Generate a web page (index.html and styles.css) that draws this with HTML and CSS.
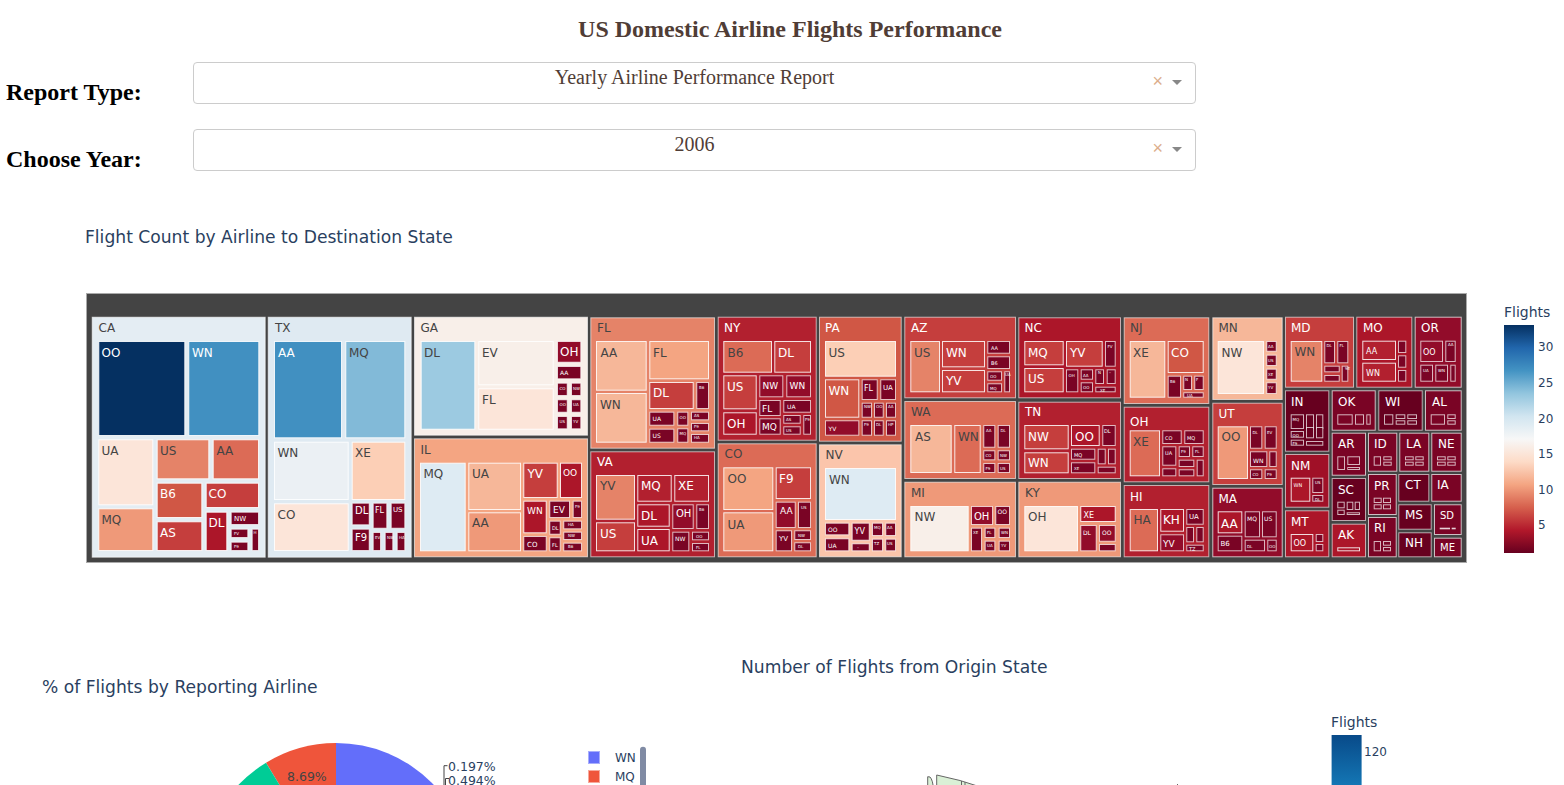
FILE: index.html
```
<!DOCTYPE html>
<html lang="en">
<head>
<meta charset="utf-8">
<title>US Domestic Airline Flights Performance</title>
<link rel="stylesheet" href="styles.css">
</head>
<body>
<h1 class="page-title">US Domestic Airline Flights Performance</h1>
<div class="row">
  <div class="row-label">Report Type:</div>
  <div class="dropdown"><span class="dd-value">Yearly Airline Performance Report</span><span class="dd-clear">×</span><span class="dd-arrow"></span></div>
</div>
<div class="row">
  <div class="row-label">Choose Year:</div>
  <div class="dropdown"><span class="dd-value">2006</span><span class="dd-clear">×</span><span class="dd-arrow"></span></div>
</div>
<h2 class="chart-title tree-title">Flight Count by Airline to Destination State</h2>
<svg class="tm" width="1564" height="340" viewBox="0 247 1564 340" role="img">
<defs>
<linearGradient id="rdbu" x1="0" y1="0" x2="0" y2="1"><stop offset="0" stop-color="#053061"/><stop offset=".1" stop-color="#2166ac"/><stop offset=".2" stop-color="#4393c3"/><stop offset=".3" stop-color="#92c5de"/><stop offset=".4" stop-color="#d1e5f0"/><stop offset=".5" stop-color="#f7f7f7"/><stop offset=".6" stop-color="#fddbc7"/><stop offset=".7" stop-color="#f4a582"/><stop offset=".8" stop-color="#d6604d"/><stop offset=".9" stop-color="#b2182b"/><stop offset="1" stop-color="#67001f"/></linearGradient>
</defs>
<rect class="plate" x="86.5" y="293.5" width="1380" height="269"/>

<!-- CA -->
<rect class="st k7b" x="92.2" y="317.2" width="173" height="240"/>
<rect class="k1" x="98.8" y="341.5" width="86" height="94"/><rect class="k2" x="188.8" y="341.5" width="70" height="94"/>
<rect class="k8" x="98.8" y="439.8" width="54" height="65"/><rect class="k13" x="157.2" y="439.8" width="51.6" height="39"/><rect class="k14" x="213.2" y="439.8" width="45.3" height="39"/>
<rect class="k12" x="98.8" y="508.8" width="54" height="41.7"/><rect class="k15" x="157.2" y="483.2" width="44.6" height="34.3"/><rect class="k16" x="206.2" y="483.2" width="52.3" height="24.3"/>
<rect class="k16" x="157.2" y="521.8" width="44.6" height="28.7"/><rect class="k18" x="206.2" y="512.2" width="20.6" height="38.3"/>
<g class="k21"><rect x="231.2" y="512.2" width="27.3" height="12.3"/><rect x="231.2" y="529.2" width="16.6" height="8.3"/><rect x="231.2" y="542.2" width="16.6" height="8.3"/><rect x="252.2" y="529.2" width="6.3" height="21.3"/></g>
<text class="d" x="98.5" y="331.7">CA</text><text x="101.5" y="356.7">OO</text><text x="192" y="356.7">WN</text><text class="d" x="101.5" y="454.5">UA</text><text class="d" x="160" y="454.5">US</text><text class="d" x="216.5" y="454.5">AA</text><text class="d" x="101.5" y="523.5">MQ</text><text x="160" y="498">B6</text><text x="208.5" y="498">CO</text><text x="160" y="536.5">AS</text><text x="208.5" y="527">DL</text>
<g class="s7"><text x="234" y="521">NW</text></g><g class="s4"><text x="234" y="535">FV</text><text x="234" y="548">F9</text><text x="253.5" y="534">H</text></g>

<!-- TX -->
<rect class="st k5b" x="268.2" y="317.2" width="143" height="240"/>
<rect class="k2" x="274.5" y="341.5" width="67" height="96.3"/><rect class="k3" x="345.8" y="341.5" width="59" height="96.3"/>
<rect class="k6" x="274.5" y="442.2" width="73.7" height="57.3"/><rect class="k9" x="352.2" y="442.2" width="52.6" height="57.3"/><rect class="k8" x="274.5" y="503.8" width="73.7" height="46.7"/>
<g class="k21"><rect x="352.2" y="503.2" width="17" height="21.6"/><rect x="373.2" y="503.2" width="13.6" height="25"/><rect x="391.2" y="503.2" width="13.6" height="25"/><rect x="352.2" y="529.2" width="17" height="21.3"/><rect x="373.2" y="532.5" width="7.3" height="18"/><rect x="385.2" y="532.5" width="7.6" height="18"/><rect x="397.2" y="532.5" width="7.6" height="18"/></g>
<text class="d" x="275" y="331.7">TX</text><text x="278" y="356.7">AA</text><text class="d" x="349" y="356.7">MQ</text><text class="d" x="277.5" y="457">WN</text><text class="d" x="355" y="457">XE</text><text class="d" x="277.5" y="518.5">CO</text>
<g class="s10"><text x="355" y="514">DL</text><text x="355" y="541">F9</text></g><g class="s8"><text x="375" y="513">FL</text></g><g class="s7"><text x="393" y="512">US</text></g><g class="s4"><text x="375" y="539">EV</text><text x="387" y="539">NW</text><text x="399" y="539">HA</text></g>

<!-- GA -->
<rect class="st k7" x="414.5" y="317.2" width="173" height="118"/>
<rect class="k4" x="421.2" y="341.5" width="53.6" height="87.7"/><rect class="k7" x="478.8" y="341.5" width="74.4" height="43.3"/><rect class="k8" x="478.8" y="388.8" width="74.4" height="40.4"/><rect class="k20" x="557.5" y="341.5" width="23.3" height="20.7"/>
<g class="k21"><rect x="557.5" y="366.5" width="23.3" height="12.3"/><rect x="557.5" y="383.2" width="9.7" height="12.3"/><rect x="571.5" y="383.2" width="9.3" height="12.3"/><rect x="557.5" y="399.8" width="9.7" height="12.4"/><rect x="571.5" y="399.8" width="9.3" height="12.4"/><rect x="557.5" y="416.5" width="9.7" height="12.3"/><rect x="571.5" y="416.5" width="9.3" height="12.3"/></g>
<text class="d" x="420.5" y="331.7">GA</text><text class="d" x="424" y="356.7">DL</text><text class="d" x="482" y="356.7">EV</text><text class="d" x="482" y="403.5">FL</text><text x="560" y="356">OH</text>
<g class="s6"><text x="560" y="375">AA</text></g><g class="s4"><text x="559.5" y="389.5">CO</text><text x="573" y="389.5">NW</text><text x="559.5" y="406">OO</text><text x="573" y="406">UA</text><text x="559.5" y="422.5">US</text><text x="573" y="422.5">YV</text></g>

<!-- IL -->
<rect class="st k11" x="414.5" y="438.8" width="173" height="118"/>
<rect class="k5" x="420.5" y="463.2" width="44.7" height="87.6"/><rect class="k10" x="468.8" y="463.2" width="51.7" height="46.3"/><rect class="k12" x="468.8" y="512.8" width="51.7" height="38"/><rect class="k16" x="523.8" y="463.2" width="33.4" height="34.3"/><rect class="k18" x="560.5" y="463.2" width="21" height="34.3"/><rect class="k18" x="523.8" y="501.2" width="22.4" height="31.6"/>
<g class="k21"><rect x="549.8" y="501.2" width="19.7" height="16.3"/><rect x="573.2" y="501.2" width="8.3" height="16.3"/><rect x="523.8" y="536.5" width="22.4" height="14.3"/><rect x="549.8" y="521.2" width="10.4" height="13"/><rect x="563.8" y="521.2" width="17.7" height="7.6"/><rect x="563.8" y="532.2" width="17.7" height="7.3"/><rect x="563.8" y="543.2" width="17.7" height="7.6"/><rect x="549.8" y="537.8" width="10.4" height="13"/></g>
<text class="d" x="420.5" y="454">IL</text><text class="d" x="423.5" y="478">MQ</text><text class="d" x="472" y="478">UA</text><text class="d" x="472" y="527">AA</text><text x="527.5" y="478">YV</text><g class="s9"><text x="563" y="475.5">OO</text><text x="527" y="513.5">WN</text><text x="553" y="513">EV</text></g>
<g class="s7"><text x="527" y="547">CO</text></g><g class="s5"><text x="552" y="529.5">DL</text><text x="552" y="546.5">FL</text></g><g class="s4"><text x="575" y="508">F9</text><text x="568" y="526">HA</text><text x="568" y="537">NW</text><text x="568" y="548">B6</text></g>

<!-- FL -->
<rect class="st k13" x="590.8" y="317.8" width="123.7" height="130.4"/>
<rect class="k10" x="596.5" y="341.5" width="49.7" height="48.7"/><rect class="k10" x="596.5" y="393.5" width="49.7" height="48.7"/><rect class="k11" x="649.8" y="341.5" width="58.7" height="37.3"/><rect class="k16" x="649.8" y="382.5" width="43.4" height="26"/>
<g class="k21"><rect x="696.8" y="382.5" width="11.7" height="26"/><rect x="649.8" y="412.2" width="24" height="13"/><rect x="649.8" y="429.2" width="24" height="13"/><rect x="677.8" y="412.2" width="10" height="13"/><rect x="677.8" y="428.8" width="10" height="13.4"/><rect x="691.5" y="412.2" width="17" height="7.6"/><rect x="691.5" y="423.5" width="17" height="7.3"/><rect x="691.5" y="434.5" width="17" height="7.7"/></g>
<text class="d" x="597" y="331.7">FL</text><text class="d" x="600.5" y="356.5">AA</text><text class="d" x="653" y="356.5">FL</text><text class="d" x="600" y="408.5">WN</text><text x="653" y="397">DL</text>
<g class="s6"><text x="652.5" y="421">UA</text><text x="652.5" y="438">US</text></g><g class="s4"><text x="699" y="389">B6</text><text x="679.5" y="419">OO</text><text x="679.5" y="435">MQ</text><text x="694" y="417">AS</text><text x="694" y="428">F9</text><text x="694" y="439">HA</text></g>

<!-- VA -->
<rect class="st k17" x="590.8" y="451.8" width="123.7" height="105"/>
<rect class="k13" x="596.5" y="475.5" width="38" height="43.7"/><rect class="k16" x="596.5" y="522.8" width="38" height="28"/><rect class="k17" x="637.8" y="475.5" width="33.4" height="25.7"/><rect class="k17" x="674.8" y="475.5" width="33.7" height="25.7"/><rect class="k18" x="637.8" y="504.8" width="31.4" height="21.4"/><rect class="k18" x="637.8" y="529.5" width="31.4" height="21.3"/><rect class="k20" x="672.8" y="504.8" width="20.4" height="23.7"/>
<g class="k21"><rect x="696.8" y="504.8" width="11.7" height="23.7"/><rect x="672.8" y="532.2" width="16" height="18.6"/><rect x="692.5" y="532.2" width="16" height="7.6"/><rect x="692.5" y="543.5" width="16" height="7.3"/></g>
<text x="597" y="466">VA</text><text class="d" x="600" y="490">YV</text><text x="600" y="537.5">US</text><text x="641" y="490">MQ</text><text x="678" y="490">XE</text><text x="641" y="520">DL</text><text x="641" y="544.5">UA</text><g class="s10"><text x="676" y="517">OH</text></g><g class="s6"><text x="675" y="541">NW</text></g><g class="s4"><text x="699" y="511">B6</text><text x="696" y="538">OO</text><text x="696" y="549">FL</text></g>

<!-- NY -->
<rect class="st k17" x="718.2" y="317.2" width="98" height="123"/>
<rect class="k14" x="723.8" y="341.5" width="47.7" height="30.7"/><rect class="k16" x="774.8" y="341.5" width="35.7" height="30.7"/><rect class="k16" x="723.8" y="375.8" width="32.4" height="33"/><rect class="k18" x="723.8" y="412.8" width="32.4" height="21.4"/><rect class="k20" x="759.8" y="375.8" width="23" height="21"/><rect class="k20" x="786.8" y="375.8" width="23.7" height="21"/>
<g class="k21"><rect x="759.8" y="400.5" width="20.4" height="15"/><rect x="783.8" y="400.5" width="26.7" height="11.7"/><rect x="759.8" y="418.8" width="20.4" height="15.4"/><rect x="783.8" y="415.5" width="16.4" height="7.7"/><rect x="783.8" y="426.8" width="16.4" height="7.4"/><rect x="803.8" y="415.5" width="6.7" height="18.7"/></g>
<text x="724" y="331.7">NY</text><text class="d" x="727.5" y="356.5">B6</text><text x="778" y="356.5">DL</text><text x="727" y="391">US</text><text x="727" y="428">OH</text><g class="s9"><text x="762.5" y="389">NW</text><text x="789.5" y="389">WN</text><text x="762" y="411.5">FL</text><text x="762" y="429.5">MQ</text></g><g class="s6"><text x="787" y="409">UA</text></g><g class="s4"><text x="786" y="421">AS</text><text x="786" y="432">US</text><text x="805" y="421">F9</text></g>

<!-- PA -->
<rect class="st k15" x="819.5" y="317.2" width="81.7" height="124"/>
<rect class="k9" x="825.5" y="341.5" width="70" height="34.7"/><rect class="k15" x="825.5" y="379.8" width="33.3" height="37.4"/><rect class="k20" x="825.5" y="420.8" width="33.3" height="14.4"/>
<g class="k21"><rect x="862.2" y="379.8" width="15" height="19.7"/><rect x="880.8" y="379.8" width="14.7" height="19.7"/><rect x="862.2" y="403.2" width="9.3" height="14"/><rect x="874.5" y="403.2" width="8.7" height="14"/><rect x="886.5" y="403.2" width="9" height="14"/><rect x="862.2" y="420.8" width="9.3" height="14.4"/><rect x="874.5" y="420.8" width="8.7" height="14.4"/><rect x="886.5" y="420.8" width="9" height="14.4"/></g>
<text x="825" y="331.7">PA</text><text class="d" x="828.5" y="356.5">US</text><text x="828.5" y="394.5">WN</text><g class="s8"><text x="864" y="391">FL</text></g><g class="s7"><text x="883" y="390">UA</text></g><g class="s6"><text x="828.5" y="431">YV</text></g><g class="s4"><text x="864" y="408">NW</text><text x="876" y="408">OO</text><text x="888" y="408">AA</text><text x="864" y="426">F9</text><text x="876" y="426">DL</text><text x="888" y="426">HP</text></g>

<!-- CO -->
<rect class="st k14" x="718.2" y="443.8" width="98" height="113"/>
<rect class="k11" x="723.8" y="467.8" width="49" height="41.7"/><rect class="k12" x="723.8" y="512.8" width="49" height="38"/><rect class="k16" x="776.2" y="467.8" width="34.3" height="30.7"/><rect class="k20" x="776.2" y="502.2" width="19" height="25.3"/>
<g class="k21"><rect x="798.5" y="502.2" width="12" height="25.3"/><rect x="776.2" y="530.8" width="15.3" height="20"/><rect x="794.8" y="530.8" width="15.7" height="8.7"/><rect x="794.8" y="542.8" width="15.7" height="8"/></g>
<text class="d" x="724.5" y="458">CO</text><text class="d" x="727.5" y="482.5">OO</text><text class="d" x="727.5" y="529">UA</text><text x="779" y="482.5">F9</text><g class="s9"><text x="780" y="514">AA</text></g><g class="s7"><text x="779" y="541">YV</text></g><g class="s4"><text x="801" y="509">US</text><text x="798" y="537">NW</text><text x="798" y="548">DL</text></g>

<!-- NV -->
<rect class="st k9b" x="819.5" y="444.8" width="81.7" height="112"/>
<rect class="k5" x="825.5" y="468.5" width="70" height="51"/>
<g class="k21"><rect x="825.5" y="523.2" width="23.3" height="11.6"/><rect x="825.5" y="538.8" width="23.3" height="12"/><rect x="852.2" y="523.2" width="17" height="17"/><rect x="852.2" y="543.8" width="17" height="7"/><rect x="872.5" y="523.2" width="10" height="12.3"/><rect x="885.8" y="523.2" width="9.7" height="12.3"/><rect x="872.5" y="539.2" width="10" height="11.6"/><rect x="885.8" y="539.2" width="9.7" height="11.6"/></g>
<text class="d" x="825.5" y="458.5">NV</text><text class="d" x="829" y="483.5">WN</text><g class="s8"><text x="854.5" y="534">YV</text></g><g class="s6"><text x="828" y="532">OO</text><text x="828" y="548">UA</text></g><g class="s4"><text x="874" y="529">MQ</text><text x="887" y="529">AA</text><text x="874" y="545">TZ</text><text x="887" y="545">US</text><text x="857" y="549">–</text></g>

<!-- AZ -->
<rect class="st k16" x="904.8" y="317.2" width="110.7" height="80.6"/>
<rect class="k13" x="910.8" y="341.5" width="28.7" height="50.3"/><rect class="k16" x="942.5" y="341.5" width="42" height="25.3"/><rect class="k16" x="942.5" y="370.5" width="42" height="21.3"/>
<g class="k21"><rect x="987.8" y="341.5" width="21.7" height="11.7"/><rect x="987.8" y="356.8" width="21.7" height="11.7"/><rect x="987.8" y="371.8" width="13.7" height="8.4"/><rect x="987.8" y="383.8" width="13.7" height="8"/><rect x="1004.8" y="371.8" width="4.7" height="20"/></g>
<text x="911" y="331.7">AZ</text><text class="d" x="914" y="356.5">US</text><text x="946" y="356.5">WN</text><text x="946" y="385">YV</text><g class="s5"><text x="991" y="350">AA</text><text x="991" y="365">B6</text></g><g class="s4"><text x="990" y="378">OO</text><text x="990" y="390">MQ</text><text x="1005" y="376">UA</text></g>

<!-- WA -->
<rect class="st k14" x="904.8" y="401.5" width="110.7" height="77"/>
<rect class="k10" x="910.8" y="425.5" width="40.4" height="47"/><rect class="k14" x="954.8" y="425.5" width="25.4" height="47"/>
<g class="k21"><rect x="983.8" y="425.5" width="11" height="21.7"/><rect x="998.2" y="425.5" width="11.3" height="21.7"/><rect x="983.8" y="450.8" width="11" height="9"/><rect x="998.2" y="450.8" width="11.3" height="9"/><rect x="983.8" y="463.5" width="11" height="9"/><rect x="998.2" y="463.5" width="11.3" height="9"/></g>
<text class="d" x="911" y="416">WA</text><text class="d" x="915" y="440.5">AS</text><text class="d" x="958" y="440.5">WN</text><g class="s4"><text x="986" y="432">AA</text><text x="1000.5" y="432">DL</text><text x="985.5" y="457">CO</text><text x="1000" y="457">NW</text><text x="985.5" y="470">F9</text><text x="1000" y="470">US</text></g>

<!-- MI -->
<rect class="st k12" x="904.8" y="482.2" width="110.7" height="74.6"/>
<rect class="k7" x="910.8" y="506.5" width="57.4" height="44.3"/><rect class="k20" x="971.5" y="506.5" width="21" height="18"/>
<g class="k21"><rect x="995.8" y="506.5" width="13.7" height="18"/><rect x="971.5" y="528.2" width="10" height="22.6"/><rect x="985.2" y="528.2" width="9.6" height="9.3"/><rect x="999.2" y="528.2" width="10.3" height="9.3"/><rect x="985.2" y="541.2" width="9.6" height="9.6"/><rect x="999.2" y="541.2" width="10.3" height="9.6"/></g>
<text class="d" x="911" y="496.5">MI</text><text class="d" x="914.5" y="521">NW</text><g class="s10"><text x="974" y="520">OH</text></g><g class="s6"><text x="997.5" y="514">OO</text></g><g class="s4"><text x="973" y="534">XE</text><text x="987" y="534">FL</text><text x="1001" y="534">WN</text><text x="987" y="547">UA</text><text x="1001" y="547">YV</text></g>

<!-- NC -->
<rect class="st k18" x="1018.8" y="317.8" width="101.7" height="80"/>
<rect class="k16" x="1024.8" y="341.5" width="38.4" height="23.3"/><rect class="k16" x="1024.8" y="368.5" width="38.4" height="23.3"/><rect class="k16" x="1066.5" y="341.5" width="35.7" height="24.7"/>
<g class="k21"><rect x="1105.5" y="341.5" width="9.7" height="24.7"/><rect x="1066.5" y="369.8" width="11.3" height="22"/><rect x="1081.2" y="369.8" width="11.3" height="9.4"/><rect x="1081.2" y="382.8" width="11.3" height="9"/><rect x="1095.8" y="369.8" width="7.7" height="13.7"/><rect x="1107.2" y="369.8" width="8" height="13.7"/><rect x="1095.8" y="387.2" width="19.4" height="4.6"/></g>
<text x="1024.5" y="331.7">NC</text><text x="1028" y="356.5">MQ</text><text x="1028" y="383">US</text><text x="1070" y="356.5">YV</text><g class="s4"><text x="1107.5" y="348">FV</text><text x="1068.5" y="377">OH</text><text x="1083" y="376.5">AA</text><text x="1083" y="389">OO</text><text x="1098" y="374">N</text><text x="1109" y="374">–</text><text x="1100" y="391.5">XE</text></g>

<!-- TN -->
<rect class="st k17" x="1018.8" y="402.2" width="101.7" height="76.3"/>
<rect class="k16" x="1024.8" y="425.5" width="43.4" height="23.3"/><rect class="k16" x="1024.8" y="452.8" width="43.4" height="20"/><rect class="k18" x="1071.5" y="425.5" width="27.7" height="20"/>
<g class="k21"><rect x="1102.8" y="425.5" width="12.4" height="20"/><rect x="1071.5" y="449.2" width="23.3" height="10"/><rect x="1071.5" y="462.8" width="23.3" height="10"/><rect x="1098.2" y="449.2" width="7" height="14.6"/><rect x="1108.5" y="449.2" width="6.7" height="14.6"/><rect x="1098.2" y="467.2" width="17" height="5.6"/></g>
<text x="1025" y="416">TN</text><text x="1028" y="440.5">NW</text><text x="1028" y="467">WN</text><text x="1075" y="440.5">OO</text><g class="s5"><text x="1104" y="433">DL</text><text x="1074" y="456.5">MQ</text></g><g class="s4"><text x="1074" y="469.5">XE</text></g>

<!-- KY -->
<rect class="st k12" x="1018.8" y="482.2" width="101.7" height="74.6"/>
<rect class="k8" x="1024.8" y="506.5" width="52.7" height="44.3"/><rect class="k18" x="1080.8" y="506.5" width="34.4" height="15"/><rect class="k20" x="1080.8" y="525.5" width="15.4" height="25.3"/><rect class="k20" x="1099.5" y="525.5" width="15.7" height="15.7"/><rect class="k21" x="1099.5" y="544.5" width="15.7" height="6.3"/>
<text class="d" x="1025" y="497">KY</text><text class="d" x="1028" y="521">OH</text><g class="s8"><text x="1083.5" y="517.5">XE</text></g><g class="s6"><text x="1083" y="535">DL</text><text x="1102" y="535">OO</text></g>

<!-- NJ -->
<rect class="st k14" x="1124.2" y="317.8" width="84.6" height="85.7"/>
<rect class="k10" x="1130.2" y="341.5" width="34.6" height="55.7"/><rect class="k15" x="1168.2" y="341.5" width="35" height="31"/>
<g class="k21"><rect x="1168.2" y="376.2" width="12.3" height="21"/><rect x="1183.8" y="376.2" width="7.7" height="13.3"/><rect x="1194.8" y="376.2" width="8.4" height="13.3"/><rect x="1183.8" y="392.8" width="19.4" height="4.4"/></g>
<text class="d" x="1130" y="331.7">NJ</text><text class="d" x="1133" y="356.5">XE</text><text x="1171" y="356.5">CO</text><g class="s4"><text x="1170" y="383">B6</text><text x="1185" y="381">N</text><text x="1196" y="381">F</text><text x="1187" y="397">UA</text></g>

<!-- OH -->
<rect class="st k17" x="1124.2" y="407.2" width="84.6" height="74.6"/>
<rect class="k14" x="1130.2" y="430.8" width="29.3" height="45"/>
<g class="k21"><rect x="1162.8" y="430.8" width="18.4" height="12.7"/><rect x="1184.8" y="430.8" width="18.4" height="12.7"/><rect x="1162.8" y="446.8" width="13" height="18.4"/><rect x="1179.2" y="446.8" width="10.3" height="9.7"/><rect x="1192.8" y="446.8" width="10.4" height="9.7"/><rect x="1162.8" y="468.8" width="13" height="7"/><rect x="1179.2" y="460.2" width="14.6" height="6.3"/><rect x="1179.2" y="469.8" width="14.6" height="6"/><rect x="1197.2" y="460.2" width="6" height="15.6"/></g>
<text x="1130" y="426">OH</text><text class="d" x="1133" y="445.5">XE</text><g class="s5"><text x="1165" y="439.5">CO</text><text x="1187" y="439.5">MQ</text><text x="1165" y="455">UA</text></g><g class="s4"><text x="1181" y="453">F9</text><text x="1195" y="453">FL</text></g>

<!-- HI -->
<rect class="st k17" x="1124.2" y="485.5" width="84.6" height="71.3"/>
<rect class="k14" x="1130.2" y="509.5" width="27.3" height="41.3"/><rect class="k18" x="1160.8" y="509.5" width="22.7" height="21.7"/><rect class="k20" x="1160.8" y="534.8" width="22.7" height="16"/>
<g class="k21"><rect x="1186.8" y="509.5" width="16.4" height="14.7"/><rect x="1186.8" y="527.5" width="6.7" height="14.3"/><rect x="1196.8" y="527.5" width="6.4" height="14.3"/><rect x="1186.8" y="545.2" width="16.4" height="5.6"/></g>
<text x="1130" y="500.5">HI</text><text class="d" x="1133.5" y="524">HA</text><text x="1163" y="524">KH</text><g class="s9"><text x="1163" y="547">YV</text></g><g class="s7"><text x="1189" y="519">UA</text></g><g class="s5"><text x="1189" y="550.5">TZ</text></g>

<!-- MN -->
<rect class="st k10" x="1212.8" y="317.8" width="69.4" height="81.7"/>
<rect class="k8" x="1218.2" y="341.5" width="45.3" height="52"/>
<g class="k21"><rect x="1266.8" y="341.5" width="9.4" height="9.7"/><rect x="1266.8" y="355.2" width="9.4" height="10.3"/><rect x="1266.8" y="369.2" width="9.4" height="10"/><rect x="1266.8" y="382.8" width="9.4" height="10.7"/></g>
<text class="d" x="1218.5" y="331.7">MN</text><text class="d" x="1221.5" y="356.5">NW</text><g class="s4"><text x="1268" y="348">AA</text><text x="1268" y="362">US</text><text x="1268" y="376">XE</text><text x="1268" y="389">YV</text></g>

<!-- UT -->
<rect class="st k16" x="1212.8" y="403.2" width="69.4" height="81.3"/>
<rect class="k12" x="1218.2" y="426.8" width="29.3" height="51.7"/>
<g class="k21"><rect x="1250.5" y="426.8" width="11.3" height="21.4"/><rect x="1265.2" y="426.8" width="11" height="21.4"/><rect x="1250.5" y="451.8" width="16.3" height="14.7"/><rect x="1269.8" y="451.8" width="6.4" height="14.7"/><rect x="1250.5" y="469.8" width="11.3" height="8.7"/><rect x="1265.2" y="469.8" width="11" height="8.7"/></g>
<text x="1218.5" y="418">UT</text><text class="d" x="1221.5" y="441">OO</text><g class="s6"><text x="1253" y="463">WN</text></g><g class="s4"><text x="1252.5" y="433.5">DL</text><text x="1267" y="433.5">EV</text><text x="1252.5" y="475.5">CO</text><text x="1267" y="475.5">F9</text></g>

<!-- MA -->
<rect class="st k20" x="1212.8" y="488.2" width="69.4" height="68.6"/>
<rect class="k18" x="1218.2" y="511.8" width="23.6" height="21"/>
<g class="k21"><rect x="1218.2" y="536.2" width="23.6" height="14.6"/><rect x="1245.2" y="511.8" width="14.3" height="25"/><rect x="1262.5" y="511.8" width="13.7" height="25"/><rect x="1245.2" y="540.2" width="19.3" height="10.6"/><rect x="1267.8" y="540.2" width="8.4" height="10.6"/></g>
<text x="1218.5" y="503">MA</text><text x="1221" y="527.5">AA</text><g class="s7"><text x="1220.5" y="546">B6</text></g><g class="s6"><text x="1247" y="520.5">MQ</text><text x="1264" y="520.5">US</text></g><g class="s4"><text x="1247" y="548">DL</text><text x="1269" y="548">OO</text></g>

<!-- MD -->
<rect class="st k16" x="1285.5" y="317.2" width="68" height="70"/>
<rect class="k13" x="1291.2" y="341.5" width="30.6" height="39.7"/>
<g class="k21"><rect x="1324.8" y="341.5" width="9.7" height="21.3"/><rect x="1337.8" y="341.5" width="10" height="21.3"/><rect x="1324.8" y="366.2" width="14.4" height="5.6"/><rect x="1324.8" y="375.5" width="14.4" height="5.7"/><rect x="1342.2" y="366.2" width="5.6" height="15"/></g>
<text x="1291" y="331.7">MD</text><text class="d" x="1294.5" y="356">WN</text><g class="s4"><text x="1326.5" y="347">DL</text><text x="1339.5" y="347">FL</text><text x="1345" y="370">9E</text></g>

<!-- MO -->
<rect class="st k18" x="1356.8" y="317.2" width="55" height="70"/>
<rect class="k17" x="1362.8" y="341.2" width="32.7" height="18.3"/><rect class="k17" x="1362.8" y="363.2" width="32.7" height="18"/>
<g class="k21"><rect x="1398.5" y="341.2" width="7.3" height="11.3"/><rect x="1398.5" y="355.8" width="7.3" height="11.4"/><rect x="1398.5" y="370.5" width="7.3" height="10.7"/></g>
<text x="1363" y="331.7">MO</text><g class="s8"><text x="1366" y="354">AA</text><text x="1366" y="376">WN</text></g>

<!-- OR -->
<rect class="st k20" x="1415.2" y="317.2" width="46" height="70"/>
<rect class="k20" x="1420.8" y="341.2" width="21.7" height="20.3"/>
<g class="k21"><rect x="1445.8" y="341.2" width="9.4" height="20.3"/><rect x="1420.8" y="365.2" width="11.7" height="16"/><rect x="1435.8" y="365.2" width="11.7" height="16"/><rect x="1450.8" y="365.2" width="4.4" height="16"/></g>
<text x="1421" y="331.7">OR</text><g class="s8"><text x="1423" y="354.5">OO</text></g><g class="s4"><text x="1448" y="346">AA</text><text x="1423" y="372">UA</text><text x="1438" y="372">WN</text></g>

<!-- IN -->
<rect class="st k22" x="1285.5" y="390.8" width="43.3" height="60.4"/>
<g class="k22"><rect x="1291.2" y="414.8" width="12.3" height="13.7"/><rect x="1306.5" y="414.8" width="7" height="13.7"/><rect x="1316.5" y="414.8" width="6.3" height="13.7"/><rect x="1291.2" y="431.5" width="12.3" height="5.7"/><rect x="1291.2" y="440.2" width="12.3" height="5"/><rect x="1306.5" y="427.5" width="7" height="10.3"/><rect x="1316.5" y="427.5" width="6.3" height="10.3"/><rect x="1306.5" y="441.5" width="16.3" height="3.7"/></g>
<text x="1291" y="406">IN</text><g class="s4"><text x="1292.5" y="421">MQ</text><text x="1292.5" y="436.5">OO</text><text x="1292.5" y="444.5">F9</text></g>

<!-- NM -->
<rect class="st k19" x="1285.5" y="454.5" width="43.3" height="52.7"/>
<rect class="k18" x="1291.2" y="478.2" width="18.6" height="23"/>
<g class="k21"><rect x="1312.8" y="478.2" width="10" height="14.3"/><rect x="1312.8" y="495.5" width="10" height="5.7"/></g>
<text x="1291" y="469.5">NM</text><g class="s5"><text x="1293.5" y="487">WN</text></g><g class="s4"><text x="1315" y="484">US</text><text x="1315" y="500.5">DL</text></g>

<!-- MT -->
<rect class="st k18" x="1285.5" y="510.8" width="43.3" height="46"/>
<rect class="k18" x="1291.2" y="534.5" width="21.6" height="16.3"/>
<g class="k21"><rect x="1316.2" y="534.5" width="6.6" height="7"/><rect x="1316.2" y="544.5" width="6.6" height="6.3"/></g>
<text x="1291" y="526">MT</text><g class="s8"><text x="1293.5" y="546">OO</text></g>

<!-- OK WI AL -->
<rect class="st k21" x="1332.2" y="390.8" width="43" height="39.4"/><rect class="st k22" x="1378.8" y="390.8" width="43.4" height="39.4"/><rect class="st k21" x="1425.5" y="390.8" width="35.7" height="39.4"/>
<g class="k21"><rect x="1337.8" y="414.8" width="14.4" height="9.4"/><rect x="1355.5" y="414.8" width="8" height="9.4"/><rect x="1366.8" y="414.8" width="3.4" height="9.4"/><rect x="1431.2" y="414.8" width="13.3" height="9.4"/><rect x="1447.8" y="414.8" width="7.4" height="3.7"/><rect x="1447.8" y="420.8" width="7.4" height="3.4"/></g>
<g class="k22"><rect x="1384.5" y="414.8" width="8.3" height="9.4"/><rect x="1396.2" y="414.8" width="8.6" height="3.7"/><rect x="1407.8" y="414.8" width="8.7" height="3.7"/><rect x="1396.2" y="420.8" width="8.6" height="3.4"/><rect x="1407.8" y="420.8" width="8.7" height="3.4"/></g>
<text x="1338" y="406">OK</text><text x="1385" y="406">WI</text><text x="1432" y="406">AL</text>

<!-- AR ID LA NE -->
<rect class="st k21" x="1332.2" y="433.2" width="33.3" height="42"/><rect class="st k21" x="1368.5" y="433.2" width="28.3" height="38"/><rect class="st k21" x="1399.8" y="433.2" width="29" height="38"/><rect class="st k21" x="1431.8" y="433.2" width="29.4" height="38"/>
<g class="k21"><rect x="1337.8" y="456.8" width="6.7" height="12.7"/><rect x="1347.8" y="456.8" width="11.7" height="7.7"/><rect x="1347.8" y="467.5" width="11.7" height="2"/><rect x="1374.2" y="456.8" width="6.3" height="8.4"/><rect x="1383.8" y="456.8" width="7.4" height="3"/><rect x="1383.8" y="462.2" width="7.4" height="3"/><rect x="1405.5" y="456.8" width="7.7" height="3"/><rect x="1415.8" y="456.8" width="7.4" height="3"/><rect x="1405.5" y="462.2" width="7.7" height="3"/><rect x="1415.8" y="462.2" width="7.4" height="3"/><rect x="1437.5" y="456.8" width="7.7" height="3"/><rect x="1447.8" y="456.8" width="7.4" height="3"/><rect x="1437.5" y="462.2" width="7.7" height="3"/><rect x="1447.8" y="462.2" width="7.4" height="3"/></g>
<text x="1338" y="448">AR</text><text x="1374" y="448">ID</text><text x="1406" y="448">LA</text><text x="1438" y="448">NE</text>

<!-- SC AK PR RI -->
<rect class="st k22" x="1332.2" y="478.5" width="33.3" height="42"/><rect class="st k18" x="1332.2" y="524.2" width="33.3" height="32.6"/><rect class="st k21" x="1368.5" y="474.5" width="27.7" height="40"/><rect class="st k21" x="1368.5" y="517.5" width="27.7" height="39.3"/>
<g class="k22"><rect x="1337.8" y="502.2" width="6.4" height="5.6"/><rect x="1337.8" y="510.2" width="6.4" height="4.3"/><rect x="1347.2" y="502.2" width="5.6" height="7.3"/><rect x="1355.2" y="502.2" width="4.3" height="7.3"/><rect x="1347.2" y="512.8" width="12.3" height="1.7"/></g>
<g class="k18"><rect x="1337.8" y="547.8" width="21.7" height="3"/></g>
<g class="k21"><rect x="1374.2" y="498.2" width="7" height="4.3"/><rect x="1383.5" y="498.2" width="7" height="4.3"/><rect x="1374.2" y="504.8" width="7" height="4"/><rect x="1383.5" y="504.8" width="7" height="4"/><rect x="1374.2" y="541.5" width="6.3" height="9.3"/><rect x="1383.5" y="541.5" width="7" height="3.7"/><rect x="1383.5" y="547.5" width="7" height="3.3"/></g>
<text x="1338" y="493.5">SC</text><text x="1338" y="539">AK</text><text x="1374" y="489.5">PR</text><text x="1374" y="532">RI</text>

<!-- CT IA MS SD NH ME -->
<rect class="st k22" x="1398.8" y="474.5" width="30" height="26.7"/><rect class="st k21" x="1431.8" y="474.5" width="29.4" height="26.7"/><rect class="st k22" x="1398.8" y="504.8" width="32.4" height="24.4"/><rect class="st k21" x="1434.5" y="504.8" width="26.7" height="29.7"/><rect class="st k22" x="1398.8" y="532.8" width="32.4" height="24"/><rect class="st k21" x="1434.5" y="538.2" width="26.7" height="18.6"/>
<rect class="bar" x="1439.7" y="527.7" width="10.3" height="1.6"/><rect class="bar" x="1451.7" y="527.7" width="4" height="1.6"/>
<text x="1405" y="489">CT</text><text x="1437" y="489">IA</text><text x="1405" y="519">MS</text><g class="s10"><text x="1440" y="519">SD</text><text x="1440" y="551">ME</text></g><text x="1405" y="547">NH</text>

<!-- colour bar -->
<rect class="cbar" x="1504" y="325" width="30" height="228" fill="url(#rdbu)"/>
<text class="ax t14" x="1504" y="317">Flights</text>
<g class="ax"><text x="1538" y="351">30</text><text x="1538" y="386.5">25</text><text x="1538" y="422.5">20</text><text x="1538" y="457.5">15</text><text x="1538" y="493.5">10</text><text x="1538" y="529">5</text></g>
</svg>
<div class="lower-titles">
  <h2 class="chart-title pie-title">% of Flights by Reporting Airline</h2>
  <h2 class="chart-title map-title">Number of Flights from Origin State</h2>
</div>
<svg class="lower" width="1564" height="88" viewBox="0 697 1564 88" role="img">
<defs>
<linearGradient id="gnbu" gradientUnits="userSpaceOnUse" x1="0" y1="735" x2="0" y2="785"><stop offset="0" stop-color="#084a89"/><stop offset="1" stop-color="#1476b4"/></linearGradient>
</defs>
<path class="p-blue" d="M336 878V743A135 135 0 0 1 471 878Z"/>
<path class="p-red" d="M336 878V743A135 135 0 0 0 266 762.7Z"/>
<path class="p-green" d="M336 878L266 762.7A135 135 0 0 0 201 878Z"/>
<text class="pie-txt" x="287" y="780.5">8.69%</text>
<path class="leader" d="M447.5 765.7H444V790M445.5 790V778.5H449"/>
<text class="pie-out" x="448" y="771">0.197%</text><text class="pie-out" x="448" y="785">0.494%</text>
<rect class="lg-blue" x="588.5" y="751.5" width="11" height="12"/><rect class="lg-red" x="588.5" y="770.5" width="11" height="12"/>
<text class="lg" x="615" y="761.7">WN</text><text class="lg" x="615" y="781">MQ</text>
<rect class="lg-bar" x="640" y="746.7" width="6" height="60" rx="3"/>
<path class="map" d="M927.7 790V776.7L930 777Q933 780 933.5 790Z"/>
<path class="map" d="M936.7 790V775L960 780.5L990 790Z"/>
<path class="map-line" d="M961.5 781V790M965 782V790"/>
<path class="map-line" d="M1177.5 784V786"/>
<rect x="1331.6" y="735" width="30" height="55" fill="url(#gnbu)"/>
<text class="ax t14" x="1331" y="727">Flights</text>
<text class="ax" x="1364" y="756">120</text>
</svg>
</body>
</html>
```
FILE: styles.css
```
html, body { margin: 0; padding: 0; }
body { width: 1564px; height: 785px; overflow: hidden; background: #fff; font-family: "Liberation Serif", serif; }

.page-title { margin: 0; height: 62px; line-height: 58px; padding-left: 16px; text-align: center; font-size: 24px; font-weight: bold; color: #503d36; }

.row { display: flex; height: 42px; margin-bottom: 25px; }
.row-label { width: 187px; padding: 16px 0 0 6px; line-height: 28px; font-size: 24px; font-weight: bold; color: #000; }
.dropdown { position: relative; box-sizing: border-box; width: 1003px; height: 42px; border: 1px solid #ccc; border-radius: 4px; text-align: center; font-size: 20px; line-height: 28px; color: #503d36; }
.dd-value { display: block; }
.dd-clear { position: absolute; right: 32px; top: 4px; font-family: "Liberation Sans", sans-serif; font-size: 18px; line-height: 28px; color: #dcae8c; }
.dd-arrow { position: absolute; right: 13px; top: 17px; width: 0; height: 0; border-style: solid; border-width: 5px 5px 0; border-color: #888 transparent transparent; }

.chart-title { margin: 0; font-family: "DejaVu Sans", sans-serif; font-size: 17.15px; font-weight: normal; line-height: 20px; color: #2a3f5f; }
.tree-title { margin-top: -11px; padding: 42px 0 0 85px; }
.tm, .lower { display: block; }
.tm { font-family: "DejaVu Sans", sans-serif; font-size: 12px; fill: #fff; }
.tm rect { stroke: rgba(255,255,255,.85); stroke-width: 1; }
.tm .k21 rect, .tm .k22 rect, .tm rect.k21, .tm rect.k20 { stroke: rgba(255,255,255,.7); }
.tm .st { stroke: rgba(255,255,255,.6); }
.tm .plate { fill: #444; stroke: #aaa; }
.tm .cbar, .tm .bar { stroke: none; }
.tm .bar { fill: #e8d0d6; }
.tm .d { fill: #444; }
.tm .ax { fill: #2a3f5f; }
.t14 { font-size: 14px; }
.s10 { font-size: 10px; } .s9 { font-size: 9px; } .s8 { font-size: 8px; } .s7 { font-size: 7px; } .s6 { font-size: 6px; } .s5 { font-size: 5px; } .s4 { font-size: 4px; }

.k1 { fill: #053061; } .k2 { fill: #4190c1; } .k3 { fill: #82bad8; } .k4 { fill: #9ccae1; } .k5 { fill: #deebf3; } .k5b { fill: #dfeaf2; }
.k6 { fill: #ebf0f4; } .k7 { fill: #f8efe9; } .k7b { fill: #e4edf3; } .k8 { fill: #fce5d9; } .k9 { fill: #fccfb6; } .k9b { fill: #fbc5ab; }
.k10 { fill: #f6b799; } .k11 { fill: #f4a582; } .k12 { fill: #ef9979; } .k13 { fill: #e58368; } .k14 { fill: #dc6b56; } .k15 { fill: #d05745; }
.k16 { fill: #c53e3d; } .k17 { fill: #b2202f; } .k18 { fill: #ac1629; } .k19 { fill: #a01027; } .k20 { fill: #920c2a; } .k21 { fill: #7a0425; } .k22 { fill: #67001f; }

.lower-titles { display: flex; margin-top: 70px; height: 40px; }
.pie-title { width: 699px; padding: 20px 0 0 42px; }
.map-title { flex: 1; }

.lower { font-family: "DejaVu Sans", sans-serif; font-size: 12px; }
.lower .ax { fill: #2a3f5f; }
.p-blue { fill: #636efa; } .p-red { fill: #ef553b; } .p-green { fill: #00cc96; }
.pie-txt { fill: #444; font-size: 12.5px; }
.pie-out { fill: #2a3f5f; font-size: 12.5px; }
.leader { fill: none; stroke: #444; stroke-width: 1; }
.lg { fill: #2a3f5f; }
.lg-blue { fill: #636efa; stroke: #a8aefc; }
.lg-red { fill: #ef553b; stroke: #f7a99c; }
.lg-bar { fill: #808ba4; }
.map { fill: #daf0d6; stroke: #666; stroke-width: 1; }
.map-line { fill: none; stroke: #666; stroke-width: 1; }
```
